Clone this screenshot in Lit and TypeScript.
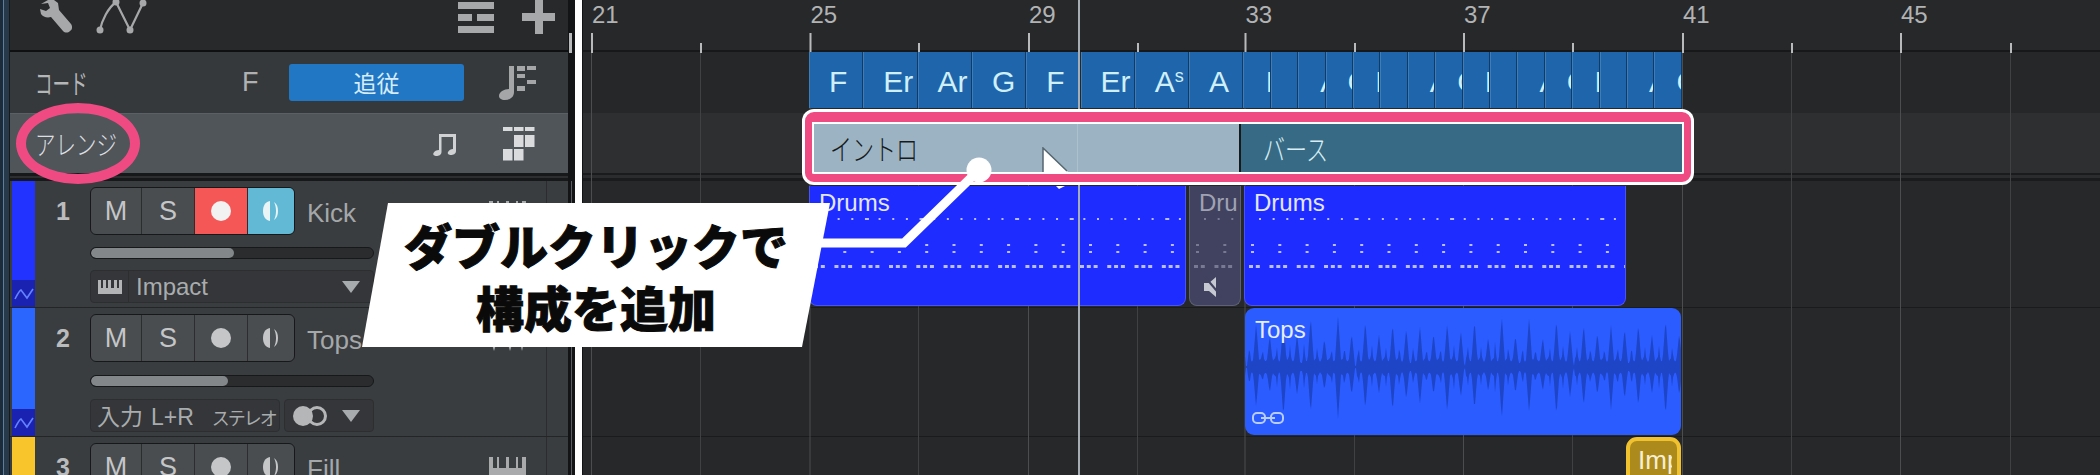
import { LitElement, html, css, svg } from "lit";
import { customElement } from "lit/decorators.js";

// timeline geometry, all measured in page pixels
const ORIGIN = 582;
// the video is slightly uneven, so these are read off the ruler, one per two bars
const GRID = [591, 700, 809.5, 918, 1028, 1137, 1244.5, 1354, 1463, 1572, 1682, 1791, 1900, 2010];
const x = (px: number) => px - ORIGIN;

const WIDE_CHORDS = [
  { name: "F" },
  { name: "Er" },
  { name: "Ar" },
  { name: "G" },
  { name: "F" },
  { name: "Er" },
  { name: "A", sup: "s" },
  { name: "A" },
];
const NARROW_CHORDS = ["I", "", "A", "G"];
const chords = [
  ...WIDE_CHORDS.map((c, i) => ({ ...c, narrow: false, left: 809 + i * 54.3, width: 54.3 })),
  ...Array.from({ length: 16 }, (_, i) => ({
    name: NARROW_CHORDS[i % 4],
    sup: undefined as string | undefined,
    narrow: true,
    left: 1243.4 + i * 27.4,
    width: 27.4,
  })),
];

const bars = [
  { label: "21", i: 0 },
  { label: "25", i: 2 },
  { label: "29", i: 4 },
  { label: "33", i: 6 },
  { label: "37", i: 8 },
  { label: "41", i: 10 },
  { label: "45", i: 12 },
];

function wavePath(width: number, mid: number) {
  const upper = [47, 36, 46, 32];
  const lower = [48, 30, 42, 26];
  const amp = (p: number, table: number[]) => {
    const pos = p - 38.4 + 54.6 * 2;
    const idx = Math.round(pos / 13.65);
    const dist = Math.abs(pos - idx * 13.65);
    const h = table[idx % 4] * (1 + 0.1 * Math.sin(idx * 2.7));
    const main = h * Math.max(0, 1 - dist / 3.5);
    const off = Math.abs(dist - 6.825);
    const second = h * 0.5 * Math.max(0, 1 - off / 2.2);
    const cycle = (pos + 41) % 109.2;
    const base = cycle < 5 ? 1 : (cycle + 54.6) % 109.2 < 8 ? 4 : 5 + 4 * Math.abs(Math.sin(p * 0.46));
    return Math.max(base, main, second);
  };
  const top: string[] = [];
  const bottom: string[] = [];
  for (let p = 0; p <= width; p += 1) {
    top.push(`${p},${(mid - amp(p, upper)).toFixed(1)}`);
    bottom.unshift(`${p},${(mid + amp(p, lower)).toFixed(1)}`);
  }
  return `M${top.join("L")}L${bottom.join("L")}Z`;
}

function drumDots(width: number) {
  const marks = [];
  for (let p = 14; p < width; p += 13.65) {
    marks.push(svg`<rect x=${p} y="32" width=${Math.round(p) % 5 ? 2 : 4} height="2"></rect>`);
  }
  for (let p = 6; p < width; p += 27.3) {
    marks.push(svg`<rect x=${p} y="58" width="3" height="2"></rect>`);
    marks.push(svg`<rect x=${p} y="65" width="3" height="2"></rect>`);
  }
  for (let p = 4; p < width; p += 6.82) {
    if (Math.round(p / 6.82) % 4 !== 3) marks.push(svg`<rect x=${p} y="79" width="4" height="3"></rect>`);
  }
  return html`<svg class="dots" width=${width} height="100">${marks}</svg>`;
}

const keysIcon = html`<svg class="keys" viewBox="0 0 37 20" width="37" height="20" fill="currentColor">
  <path d="M0 0h4v11h4V0h2v11h7V0h3v11h7V0h2v11h4V0h4v20H0z"></path>
</svg>`;

const waveIcon = html`<svg class="keys" viewBox="0 0 37 26" width="37" height="26" fill="currentColor">
  <path d="M5 0 9 13 5 26 1 13zM21 0l4 13-4 13-4-13zM33 0l3 13-3 13-3-13zM13 7l2 6-2 6-2-6zM28 7l1.500 6-1.500 6-1.500-6z"></path>
</svg>`;

const autoIcon = html`<svg viewBox="0 0 23 26" width="23" height="26" fill="none" stroke="#6482ff" stroke-width="1.6">
  <path d="M3 18C5 14 7 10 9 9l6 8 6-9"></path>
</svg>`;

const recDot = html`<svg viewBox="0 0 24 24" width="24" height="24"><circle cx="12" cy="12" r="10" fill="currentColor"></circle></svg>`;
const monIcon = html`<svg viewBox="0 0 22 24" width="22" height="24" fill="currentColor">
  <path d="M10 2C5 3 3 7 3 12s2 9 7 10z"></path>
  <path d="M14 3c3 2 4 5 4 9s-1 7-4 9c1.500-3 2-6 2-9s-.5-6-2-9z"></path>
</svg>`;

@customElement("app-root")
export class AppRoot extends LitElement {
  static styles = css`
    :host {
      display: block;
      width: 2100px;
      height: 475px;
      overflow: hidden;
      font-family: "Liberation Sans", "Noto Sans CJK JP", sans-serif;
    }
    .app {
      position: relative;
      display: flex;
      width: 2100px;
      height: 475px;
      overflow: hidden;
      background: #222426;
    }
    .jp {
      display: inline-block;
      font-family: "Noto Sans CJK JP", sans-serif;
      font-weight: 300;
      transform: scaleX(0.78);
      transform-origin: left center;
      white-space: nowrap;
    }

    /* left edge */
    .rail {
      width: 10px;
      flex: none;
      box-sizing: border-box;
      background: linear-gradient(90deg, #1c2c3a 0 3px, #5d7f9b 3px 4px, #263a4c 4px 9px, #17191b 9px);
    }

    /* track list */
    .panel {
      width: 558px;
      flex: none;
      display: flex;
      flex-direction: column;
      background: #3a3d40;
    }
    .gutter {
      position: relative;
      width: 7px;
      flex: none;
      background: #131416;
    }
    .gutter::before {
      content: "";
      position: absolute;
      left: 1px;
      top: 33px;
      width: 3px;
      height: 20px;
      background: #b8babb;
    }
    .gutter::after {
      content: "";
      position: absolute;
      left: 3px;
      top: 181px;
      bottom: 0;
      width: 1px;
      background: #5a5d60;
    }
    .divider {
      width: 7px;
      flex: none;
      background: #fff;
    }
    .toolbar {
      position: relative;
      height: 50px;
      flex: none;
      box-sizing: border-box;
      padding: 0 13px 0 30px;
      display: flex;
      align-items: flex-start;
      gap: 23px;
      background: #27292b;
      color: #a6a8aa;
    }
    .toolbar .push {
      margin-left: auto;
    }
    .blackline {
      height: 2px;
      flex: none;
      background: #0f1011;
    }
    .row-head {
      display: flex;
      align-items: center;
      box-sizing: border-box;
      flex: none;
      padding-left: 25px;
      color: #b4b6b8;
    }
    .chord-head {
      height: 61px;
      background: #36393c;
    }
    .chord-head .jp {
      font-size: 27px;
      font-weight: 400;
      width: 180px;
      transform: scaleX(0.65);
    }
    .chord-head .key {
      width: 62px;
      margin-left: 27px;
      font-size: 27px;
      color: #aeb0b2;
    }
    .follow {
      width: 175px;
      height: 37px;
      border-radius: 3px;
      background: #2177c4;
      color: #d7ecf8;
      font-size: 23px;
      line-height: 37px;
      text-align: center;
      font-family: "Noto Sans CJK JP", sans-serif;
      margin-left: -15px;
    }
    .chord-head svg {
      margin-left: 35px;
    }
    .arrange-head {
      height: 60px;
      background: #50555a;
      border-top: 1px solid #5b6066;
    }
    .arrange-head .jp {
      font-size: 27px;
      color: #dcdee0;
      width: 396px;
      transform: scaleX(0.76);
    }
    .arrange-head .grid-icon {
      margin-left: 46px;
    }
    .sep {
      height: 8px;
      flex: none;
      background: linear-gradient(#17181a 0 3px, #2c2e30 3px 5px, #17181a 5px);
    }

    .track {
      display: flex;
      flex: none;
      box-sizing: border-box;
      height: 127px;
      border-bottom: 1px solid #232527;
    }
    .track.mid {
      height: 129px;
    }
    .strip {
      width: 23px;
      margin-left: 2px;
      flex: none;
      display: flex;
      flex-direction: column;
      justify-content: flex-end;
    }
    .strip .auto {
      height: 27px;
      display: flex;
      align-items: center;
      justify-content: center;
      background: #1a22b2;
    }
    .body {
      width: 512px;
      flex: none;
      box-sizing: border-box;
      padding: 6px 0 0 21px;
      border-right: 1px solid #2a2c2e;
      display: grid;
      grid-template-columns: 34px 217px 1fr;
      grid-template-rows: 48px 12px 33px;
      row-gap: 11.5px;
      align-items: center;
      align-content: start;
      color: #a9acae;
    }
    .mid .body {
      row-gap: 12.5px;
    }
    .num {
      grid-column: 1;
      grid-row: 1;
      font-size: 25px;
      font-weight: 700;
      color: #b9bbbd;
    }
    .buttons {
      grid-column: 2;
      grid-row: 1;
      display: flex;
      height: 48px;
      width: 205px;
      box-sizing: border-box;
      border: 1px solid #17181a;
      border-radius: 6px;
      overflow: hidden;
      background: #4a4d50;
    }
    .btn {
      flex: none;
      width: 52px;
      display: flex;
      align-items: center;
      justify-content: center;
      font-size: 27px;
      color: #c4c6c8;
      border-right: 1px solid #2b2d2f;
    }
    .btn:nth-child(1) {
      width: 50px;
    }
    .btn:last-child {
      border-right: 0;
      flex: 1;
    }
    .btn.rec {
      background: #f55656;
      color: #f2f2f2;
    }
    .btn.mon {
      background: #62b9d6;
      color: #e9f4f7;
    }
    .name {
      grid-column: 3;
      grid-row: 1;
      display: flex;
      align-items: center;
      justify-content: space-between;
      font-size: 26px;
      margin-right: 20px;
      color: #a5a8aa;
    }
    .name span {
      padding-top: 4px;
    }
    .name svg {
      color: #a8aaac;
    }
    .slider {
      grid-column: 2 / 4;
      grid-row: 2;
      width: 284px;
      height: 12px;
      box-sizing: border-box;
      border: 1px solid #17181a;
      border-radius: 6px;
      background: #2a2c2e;
      overflow: hidden;
    }
    .slider span {
      display: block;
      height: 100%;
      border-radius: 5px;
      background: #83878a;
    }
    .box {
      grid-column: 2 / 4;
      grid-row: 3;
      height: 33px;
      display: flex;
      gap: 4px;
    }
    .field {
      display: flex;
      align-items: center;
      height: 33px;
      box-sizing: border-box;
      background: #343639;
      border: 1px solid #2c2e30;
      border-radius: 4px;
      color: #a9acae;
    }
    .field.inst {
      width: 284px;
      font-size: 24px;
    }
    .field.inst .cell {
      width: 37px;
      height: 100%;
      display: flex;
      align-items: center;
      justify-content: center;
      border-right: 1px solid #2c2e30;
      margin-right: 7px;
    }
    .tri {
      width: 0;
      height: 0;
      border-left: 9px solid transparent;
      border-right: 9px solid transparent;
      border-top: 12px solid #a8abad;
    }
    .field.inst .tri {
      margin-left: auto;
      margin-right: 13px;
    }
    .field.input {
      width: 190px;
      flex: none;
      padding-left: 6px;
      font-size: 23px;
      gap: 8px;
      align-items: baseline;
      line-height: 31px;
      white-space: nowrap;
      overflow: hidden;
    }
    .field.input .in {
      flex: none;
      font-family: "Noto Sans CJK JP", sans-serif;
      font-size: 23px;
      line-height: 31px;
    }
    .field.input .stereo {
      flex: none;
      font-family: "Noto Sans CJK JP", sans-serif;
      font-size: 18px;
      line-height: 31px;
      letter-spacing: -2px;
      margin-left: 10px;
    }
    .field.chan {
      width: 90px;
      justify-content: space-between;
      padding: 0 13px 0 7px;
    }
    .side {
      flex: 1;
    }

    /* timeline */
    .timeline {
      position: relative;
      flex: 1;
      overflow: hidden;
    }
    .ruler {
      height: 50px;
      background: #26282a;
    }
    .t-black {
      height: 2px;
      background: #17181a;
    }
    .t-chord {
      height: 61px;
      background: #252729;
    }
    .t-arrange {
      height: 60px;
      background: #2d2f31;
    }
    .t-sep {
      height: 8px;
      background: linear-gradient(#1a1b1d 0 2px, #2a2c2e 2px 5px, #1a1b1d 5px);
    }
    .t-track {
      height: 127px;
      box-sizing: border-box;
      background: #26282a;
      border-bottom: 1px solid #1a1b1d;
    }
    .t-track.mid {
      height: 129px;
    }
    .lines {
      position: absolute;
      inset: 0;
    }
    .canvas {
      position: absolute;
      inset: 0;
      box-shadow: inset 1px 0 #121315;
    }
    .barnum {
      position: absolute;
      top: 1px;
      font-size: 24px;
      color: #b2b3b4;
    }
    .chord {
      position: absolute;
      top: 52px;
      height: 56px;
      box-sizing: border-box;
      overflow: hidden;
      padding-left: 19px;
      background: #1f65ab;
      border-left: 1px solid #3f7db9;
      border-right: 1px solid #123a63;
      font-size: 30px;
      line-height: 60px;
      color: #cff0f8;
      white-space: nowrap;
    }
    .chord.narrow {
      padding-left: 21px;
    }
    .chord sup {
      font-size: 18px;
      line-height: 0;
      vertical-align: 10px;
    }
    .clip {
      position: absolute;
      box-sizing: border-box;
      overflow: hidden;
      border-radius: 0 0 8px 8px;
      font-size: 24px;
      padding: 3px 0 0 9px;
      background: #1f2cff;
      color: #e3e6ff;
      border: 1px solid #4a55ee;
      border-top: 0;
    }
    .clip .dots {
      position: absolute;
      left: 0;
      top: 0;
      fill: #b9beff;
    }
    .clip.muted {
      background: #41425f;
      color: #a0a2b4;
      border-color: #5f6075;
    }
    .clip.muted .dots {
      fill: #777a92;
    }
    .clip.muted .mute {
      position: absolute;
      left: 13px;
      top: 90px;
      color: #c6c8d2;
    }
    .clip.audio {
      background: #2b5cff;
      border: 0;
      border-radius: 9px;
      padding: 8px 0 0 10px;
      color: #e6edff;
    }
    .clip.audio .wave {
      position: absolute;
      left: 0;
      top: 0;
      fill: #1d45c6;
    }
    .clip.audio span {
      position: relative;
    }
    .clip.audio .link {
      position: absolute;
      left: 7px;
      top: 103px;
      color: #b8cdfc;
    }
    .clip.event {
      background: #ad8a1c;
      border: 4px solid #f0c22f;
      border-radius: 11px;
      padding: 4px 0 0 8px;
      color: #f7efd2;
      white-space: nowrap;
      font-size: 26px;
    }
    .clip.event span {
      display: block;
      width: 34px;
      overflow: hidden;
    }
    .playhead {
      position: absolute;
      left: 496px;
      top: 0;
      width: 2px;
      height: 475px;
      background: #a6adb4;
    }
    .frame {
      position: absolute;
      left: 223px;
      top: 112px;
      width: 886px;
      height: 70px;
      box-sizing: border-box;
      display: flex;
      border-style: solid;
      border-color: #f04a83;
      border-width: 10px 7px 8px 7px;
      border-radius: 9px;
      box-shadow: 0 0 0 3px #fff;
      background: #fff;
      padding: 2px;
    }
    .section {
      height: 100%;
      box-sizing: border-box;
      padding-left: 16px;
      display: flex;
      align-items: center;
      font-size: 29px;
      position: relative;
    }
    .section .jp {
      transform: scaleX(0.76);
    }
    .section.intro {
      width: 427px;
      background: #9bb3c2;
      color: #17191b;
      border-right: 2px solid #17191b;
      flex: none;
    }
    .section.intro::after {
      content: "";
      position: absolute;
      left: 263px;
      top: 0;
      bottom: 0;
      width: 1px;
      background: rgba(255, 255, 255, 0.18);
    }
    .section.verse {
      flex: 1;
      background: #376b85;
      color: #d8eef4;
      padding-left: 22px;
    }
    .cursor {
      position: absolute;
      left: 460px;
      top: 147px;
    }
    .cursor-tip {
      position: absolute;
      left: 474px;
      top: 186px;
    }

    /* annotations on top of everything */
    .ring {
      position: absolute;
      left: 16px;
      top: 103px;
      width: 124px;
      height: 81px;
      box-sizing: border-box;
      border: 10px solid #f04a83;
      border-radius: 50%;
    }
    .connector {
      position: absolute;
      left: 0;
      top: 0;
    }
    .callout {
      position: absolute;
      left: 362px;
      top: 203px;
      width: 468px;
      height: 144px;
      clip-path: polygon(26px 0, 100% 0, 440px 100%, 0 100%);
      background: #fff;
      display: flex;
      flex-direction: column;
      align-items: center;
      justify-content: center;
      color: #0a0a0a;
      font-family: "Noto Sans CJK JP", sans-serif;
      font-weight: 900;
      font-size: 48px;
      line-height: 62px;
      -webkit-text-stroke: 1px #0a0a0a;
      white-space: nowrap;
    }
  `;

  private trackButtons(active: boolean) {
    return html`<div class="buttons">
      <div class="btn">M</div>
      <div class="btn">S</div>
      <div class="btn ${active ? "rec" : ""}">${recDot}</div>
      <div class="btn ${active ? "mon" : ""}">${monIcon}</div>
    </div>`;
  }

  private renderToolbar() {
    return html`<div class="toolbar">
      <svg viewBox="0 0 34 34" width="34" height="34" fill="currentColor" style="margin-left:-1px">
        <path d="M2 4 9 0h6l4 3 1 7 12 14c2 3 1 6-1 7-2 2-5 2-7 0L12 17c-4 1-8 0-10-3l-1-5 6 2 4-3-2-5z"></path>
      </svg>
      <svg viewBox="0 0 52 34" width="52" height="34" fill="none" stroke="currentColor" stroke-width="2.2">
        <path d="M4 30C6 20 12 8 20 2l14 28L47 3"></path>
        <g fill="currentColor" stroke="none">
          <circle cx="4" cy="30" r="3.500"></circle>
          <circle cx="20" cy="2" r="3.500"></circle>
          <circle cx="34" cy="30" r="3.500"></circle>
          <circle cx="47" cy="3" r="3.500"></circle>
        </g>
      </svg>
      <svg class="push" viewBox="0 0 36 32" width="36" height="32" fill="currentColor" style="margin-top:2px">
        <path d="M0 0h36v7H0zM0 12h14v7H0zM19 12h17v7H19zM0 24h36v7H0z"></path>
      </svg>
      <svg viewBox="0 0 33 34" width="33" height="34" fill="currentColor" style="margin-left:5px">
        <path d="M13 0h8v13h12v8H21v13h-8V21H0v-8h13z"></path>
      </svg>
    </div>`;
  }

  private renderHeads() {
    return html`
      <div class="row-head chord-head">
        <span class="jp">コード</span>
        <span class="key">F</span>
        <div class="follow">追従</div>
        <svg viewBox="0 0 38 34" width="38" height="34" fill="#a4a6a8" style="margin-left:35px">
          <path d="M10 0h5v26c0 5-4 8-9 8-4 0-6-2-6-4 0-4 5-7 10-7z"></path>
          <path d="M18 0h8v5h-8zM28 0h9v4h-9zM18 8h8v4h-8zM28 14h9v4h-9zM18 20h8v5h-8z"></path>
        </svg>
      </div>
      <div class="row-head arrange-head">
        <span class="jp">アレンジ</span>
        <svg viewBox="0 0 26 24" width="26" height="24" fill="#cfd1d3">
          <path d="M8 2h17v17c0 3-3 4-5 4s-4-1-3-3 3-3 5-3V5H10.500v15c0 3-3 4-5 4s-4-1-3-3 3-3 5.500-3z"></path>
        </svg>
        <svg class="grid-icon" viewBox="0 0 32 34" width="32" height="34" fill="#d9dbdd">
          <path d="M0 0h9.500v4H0zM11 0h9.500v4H11zM22 0h9.500v4H22zM11 8h9.500v12H11zM22 8h9.500v12H22zM0 22h9.500v11.500H0zM11 22h9.500v11.500H11z"></path>
        </svg>
      </div>
      <div class="sep"></div>
    `;
  }

  private renderTracks() {
    return html`
      <div class="track">
        <div class="strip" style="background:#2333ff"><div class="auto">${autoIcon}</div></div>
        <div class="body">
          <div class="num">1</div>
          ${this.trackButtons(true)}
          <div class="name"><span>Kick</span>${keysIcon}</div>
          <div class="slider"><span style="width:143px"></span></div>
          <div class="box">
            <div class="field inst">
              <div class="cell">
                <svg viewBox="0 0 24 14" width="24" height="14" fill="#b2b4b6"><path d="M0 0h3v8h2V0h3v8h2V0h3v8h3V0h3v8h2V0h3v14H0z"></path></svg>
              </div>
              Impact
              <div class="tri"></div>
            </div>
          </div>
        </div>
        <div class="side"></div>
      </div>
      <div class="track mid">
        <div class="strip" style="background:#2b66ff"><div class="auto">${autoIcon}</div></div>
        <div class="body">
          <div class="num">2</div>
          ${this.trackButtons(false)}
          <div class="name"><span>Tops</span>${waveIcon}</div>
          <div class="slider"><span style="width:137px"></span></div>
          <div class="box">
            <div class="field input">
              <span class="in">入力</span><span>L+R</span>
              <span class="stereo">ステレオ</span>
            </div>
            <div class="field chan">
              <svg viewBox="0 0 36 22" width="36" height="22" fill="none">
                <circle cx="11" cy="11" r="10" fill="#b4b6b8"></circle>
                <circle cx="25" cy="11" r="8.5" stroke="#b4b6b8" stroke-width="3"></circle>
              </svg>
              <div class="tri"></div>
            </div>
          </div>
        </div>
        <div class="side"></div>
      </div>
      <div class="track">
        <div class="strip" style="background:#f8c52c"></div>
        <div class="body">
          <div class="num">3</div>
          ${this.trackButtons(false)}
          <div class="name"><span>Fill</span>${keysIcon}</div>
        </div>
        <div class="side"></div>
      </div>
    `;
  }

  private renderGrid() {
    const lines = GRID.flatMap((g, i) => {
      const major = i % 2 === 0;
      return [
        svg`<rect x=${x(g)} y=${major ? 33 : 43} width="2" height=${major ? 20 : 10} fill="#b8babb"></rect>`,
        svg`<rect x=${x(g)} y="53" width="1" height="422" fill=${major ? "#4b4d4f" : "#3f4143"}></rect>`,
      ];
    });
    return html`<svg class="lines" width="1518" height="475">${lines}</svg>`;
  }

  private renderClips() {
    return html`
      ${bars.map((b) => html`<div class="barnum" style="left:${x(GRID[b.i]) + 1}px">${b.label}</div>`)}
      ${chords.map(
        (c) => html`<div class="chord ${c.narrow ? "narrow" : ""}" style="left:${x(c.left)}px;width:${c.width}px">${c.name}${c.sup ? html`<sup>${c.sup}</sup>` : ""}</div>`
      )}
      <div class="clip" style="left:${x(809)}px;top:186px;width:377px;height:120px">Drums${drumDots(377)}</div>
      <div class="clip muted" style="left:${x(1189)}px;top:186px;width:52px;height:120px">
        Dru${drumDots(52)}
        <svg class="mute" viewBox="0 0 20 22" width="20" height="22" fill="currentColor">
          <path d="M1 7h5l7-6v20l-7-6H1z"></path>
          <path d="M2 1l17 20" stroke="#41425f" stroke-width="2"></path>
        </svg>
      </div>
      <div class="clip" style="left:${x(1244)}px;top:186px;width:382px;height:120px">Drums${drumDots(382)}</div>
      <div class="clip audio" style="left:${x(1245)}px;top:308px;width:436px;height:127px">
        <svg class="wave" width="436" height="127"><path d=${wavePath(436, 59)}></path></svg>
        <span>Tops</span>
        <svg class="link" viewBox="0 0 32 14" width="32" height="14" fill="none" stroke="currentColor" stroke-width="2">
          <rect x="1" y="2" width="12" height="10" rx="4"></rect>
          <rect x="19" y="2" width="12" height="10" rx="4"></rect>
          <path d="M9 7h14"></path>
        </svg>
      </div>
      <div class="clip event" style="left:${x(1626)}px;top:437px;width:55px;height:50px"><span>Imp</span></div>
      <div class="playhead"></div>
      <div class="frame">
        <div class="section intro"><span class="jp">イントロ</span></div>
        <div class="section verse"><span class="jp">バース</span></div>
      </div>
      <svg class="cursor" viewBox="0 0 27 26" width="27" height="26">
        <path d="M1 1 26 25H1z" fill="#fff"></path>
        <path d="M1 25V1l24 23" fill="none" stroke="#56666f" stroke-width="1.500"></path>
      </svg>
      <svg class="cursor-tip" viewBox="0 0 9 3" width="9" height="3"><path d="M0 0h9L3 3z" fill="#fff"></path></svg>
    `;
  }

  render() {
    return html`<div class="app">
      <div class="rail"></div>
      <div class="panel">${this.renderToolbar()}<div class="blackline"></div>${this.renderHeads()}${this.renderTracks()}</div>
      <div class="gutter"></div>
      <div class="divider"></div>
      <div class="timeline">
        <div class="ruler"></div>
        <div class="t-black"></div>
        <div class="t-chord"></div>
        <div class="t-arrange"></div>
        <div class="t-sep"></div>
        <div class="t-track"></div>
        <div class="t-track mid"></div>
        <div class="t-track"></div>
        ${this.renderGrid()}
        <div class="canvas">${this.renderClips()}</div>
      </div>
      <div class="ring"></div>
      <svg class="connector" width="1000" height="300" fill="none">
        <path d="M979 170 904 243H815" stroke="#fff" stroke-width="9"></path>
        <circle cx="979" cy="170" r="12.5" fill="#fff"></circle>
      </svg>
      <div class="callout">
        <div>ダブルクリックで</div>
        <div>構成を追加</div>
      </div>
    </div>`;
  }
}
